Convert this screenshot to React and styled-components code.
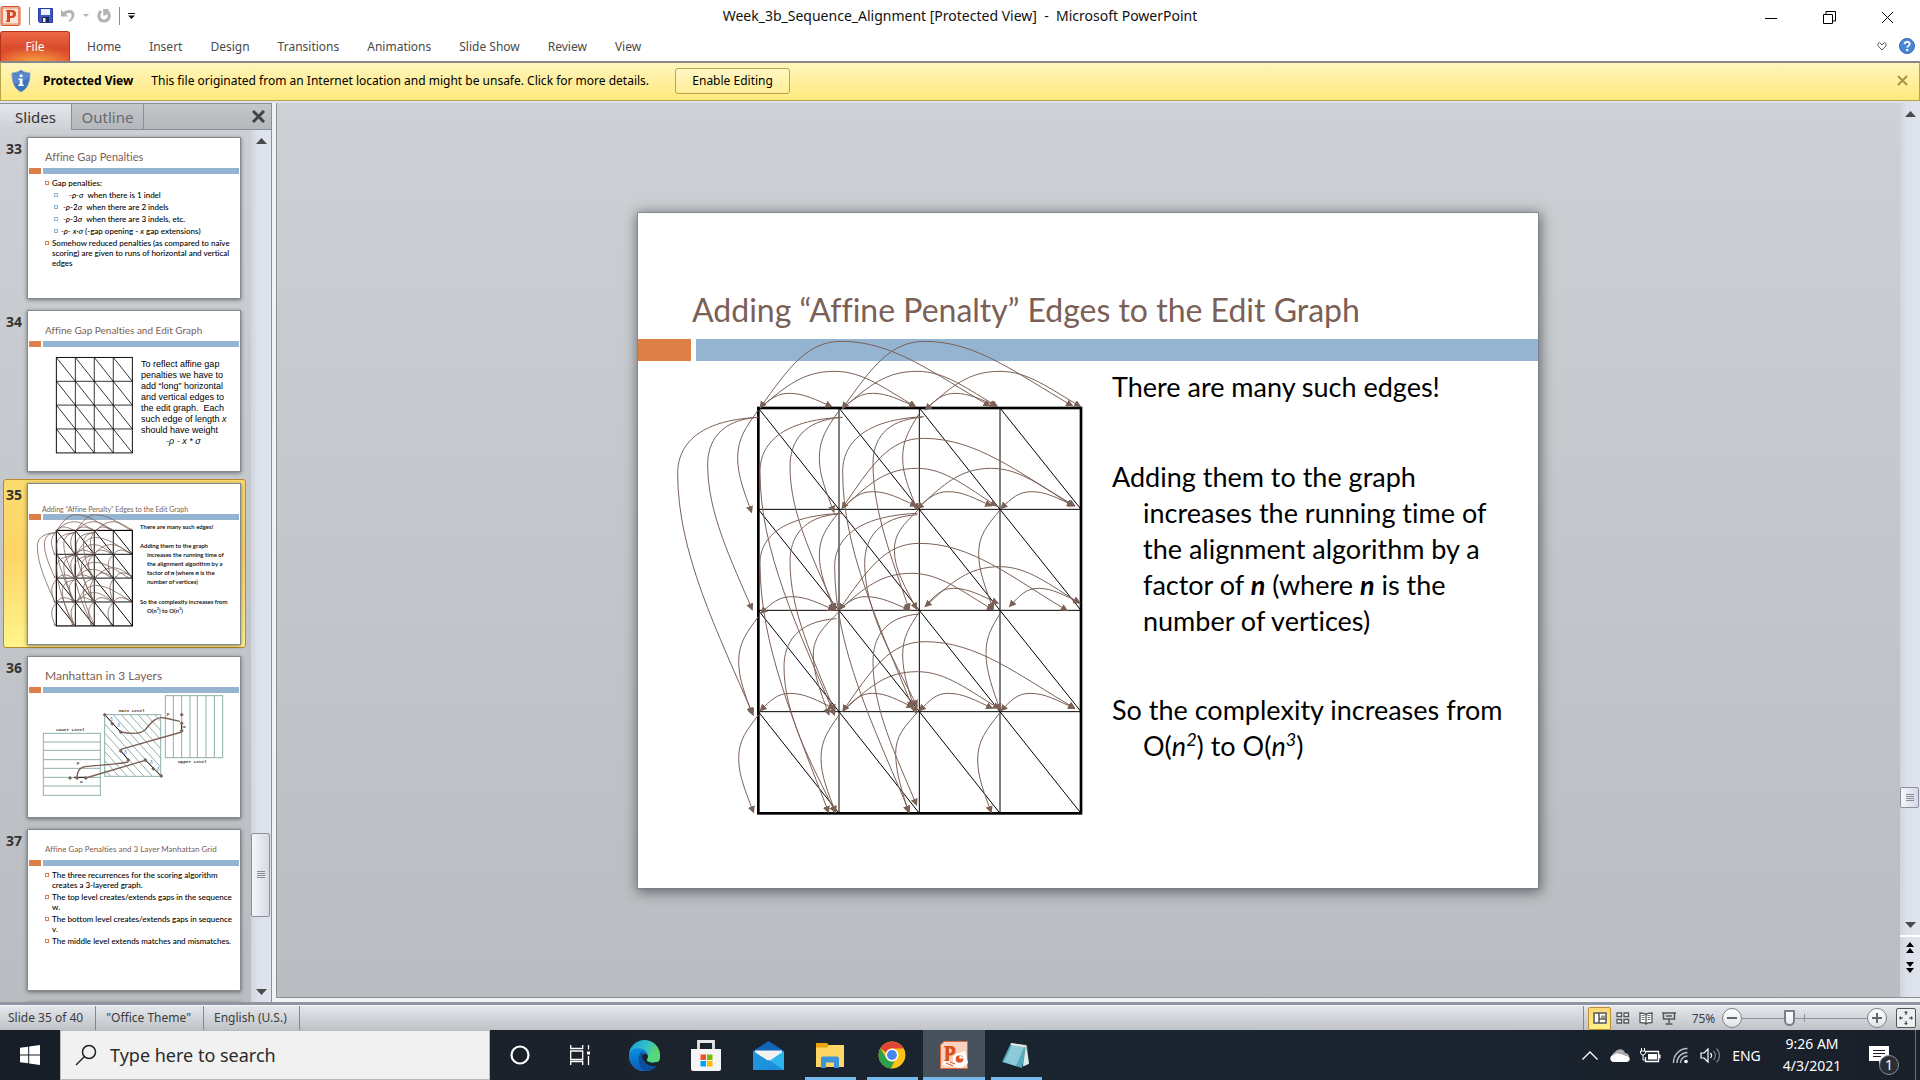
import React from "react";
import styled, { createGlobalStyle, css } from "styled-components";

const UI = `"Noto Sans", "Open Sans", sans-serif`;
const DECK = `Lato, "Open Sans", sans-serif`;
const BROWN = "#7b6056";
const ORANGE = "#dd8047";
const BLUE = "#94b4d2";

const Global = createGlobalStyle`
  *, *::before, *::after { box-sizing: border-box; }
  html, body { margin: 0; padding: 0; }
  body { font-family: ${UI}; font-size: 12px; color: #444; overflow: hidden; }
  button, input { font: inherit; color: inherit; }
  button { border: 0; padding: 0; background: none; display: flex; align-items: center; justify-content: center; }
  svg { display: block; flex: none; }
  p, ul, h1, h2 { margin: 0; padding: 0; font-weight: inherit; font-size: inherit; }
`;

const Page = styled.div`
  height: 100vh;
  display: flex;
  flex-direction: column;
  background: #fff;
`;

/* ---------- title bar and ribbon ---------- */
const TitleBar = styled.header`
  height: 31px;
  flex: none;
  display: grid;
  grid-template-columns: 1fr auto 1fr;
  align-items: center;
`;
const QuickAccess = styled.div`
  display: flex;
  align-items: center;
  gap: 8px;
  height: 26px;
`;
const Separator = styled.i`
  width: 1px;
  height: 18px;
  background: #8a8a8a;
`;
const WindowTitle = styled.h1`
  font-size: 14px;
  color: #111;
`;
const WindowButtons = styled.div`
  display: flex;
  justify-content: flex-end;
  align-items: center;
  height: 31px;
  padding: 4px 4px 0 0;
`;
const WindowButton = styled.button`
  width: 58px;
  height: 26px;
`;
const Ribbon = styled.nav`
  height: 30px;
  flex: none;
  display: flex;
  align-items: stretch;
`;
const FileTab = styled.button`
  width: 70px;
  border: 1px solid #b5341c;
  border-bottom: 0;
  border-radius: 3px 3px 0 0;
  color: #fff;
  background: radial-gradient(ellipse 60% 60% at 50% 110%, #f7a944, rgba(247, 169, 68, 0)),
    linear-gradient(#ee6a47, #d94a2b 55%, #e4532e);
  margin-right: 3px;
`;
const Tab = styled.button`
  padding: 0 14px;
  color: #4a4a4a;
`;
const RibbonEnd = styled.div`
  margin-left: auto;
  display: flex;
  align-items: center;
  gap: 12px;
  padding-right: 5px;
`;

/* ---------- message bar ---------- */
const MessageBar = styled.section`
  height: 40px;
  flex: none;
  display: flex;
  align-items: center;
  border: 1px solid #b5a450;
  border-top: 2px solid #85878c;
  background: linear-gradient(#fff5bd, #ffe97c);
  color: #000;
  padding: 0 11px 2px 10px;
`;
const MessageTitle = styled.strong`
  margin: 0 18px 0 12px;
`;
const MessageButton = styled.button`
  margin-left: 26px;
  width: 115px;
  height: 26px;
  border: 1px solid #b5a450;
  border-radius: 3px;
  background: linear-gradient(#fff7c4, #ffee98);
`;
const MessageClose = styled.button`
  margin-left: auto;
`;

/* ---------- workspace ---------- */
const Workspace = styled.div`
  flex: 1;
  min-height: 0;
  display: grid;
  grid-template-columns: 272px minmax(0, 1fr);
  border-top: 2px solid #dfe2e6;
  border-bottom: 3px solid #8f96a2;
  background: linear-gradient(#cdd0d4, #b9bcc0);
`;
const Pane = styled.aside`
  display: flex;
  flex-direction: column;
  min-height: 0;
  border-right: 1px solid #8a9098;
`;
const PaneTabs = styled.div`
  height: 27px;
  flex: none;
  display: flex;
  border-top: 1px solid #8a9098;
`;
const PaneTab = styled.button`
  width: 72px;
  font-size: 15px;
  color: ${(p) => (p.$active ? "#333" : "#666a6e")};
  border-right: 1px solid #8a9098;
  ${(p) =>
    p.$active
      ? css`background: linear-gradient(#e3e6ea, #cdd0d4);`
      : css`background: linear-gradient(#c3c7ca, #b4b8bc); border-bottom: 1px solid #8a9098;`}
`;
const PaneTabFill = styled.div`
  flex: 1;
  display: flex;
  align-items: center;
  justify-content: flex-end;
  padding-right: 6px;
  background: linear-gradient(#c3c7ca, #b4b8bc);
  border-bottom: 1px solid #8a9098;
`;
const PaneBody = styled.div`
  flex: 1;
  min-height: 0;
  display: grid;
  grid-template-columns: minmax(0, 1fr) 20px;
`;
const ThumbList = styled.ol`
  list-style: none;
  margin: 0;
  padding: 3px 5px 0 3px;
  overflow: hidden;
  display: flex;
  flex-direction: column;
  gap: 4px;
`;
const ThumbItem = styled.li`
  flex: none;
  height: 169px;
  display: grid;
  grid-template-columns: 24px 212px;
  align-items: start;
  padding-top: 4px;
  border: 1px solid ${(p) => (p.$active ? "#b98a2c" : "transparent")};
  border-radius: 3px;
  background: ${(p) => (p.$active ? "linear-gradient(#fbdc6e, #fdd468 45%, #fff58a)" : "none")};
`;
const ThumbNumber = styled.b`
  font-size: 14px;
  line-height: 22px;
  padding-left: 2px;
  color: #333;
`;
const Thumb = styled.article`
  height: 160px;
  position: relative;
  display: flex;
  flex-direction: column;
  background: #fff;
  box-shadow: 0 0 0 1px #85888f, 0 1px 4px 1px rgba(0, 0, 0, 0.45);
  font-family: ${DECK};
  font-variant-ligatures: none;
  color: #000;
`;
const ThumbTitle = styled.h2`
  height: 30px;
  flex: none;
  padding: ${(p) => (p.$low ? "20px 0 0 14px" : "8px 0 0 17px")};
  display: flex;
  align-items: center;
  white-space: nowrap;
  font-size: ${(p) => p.$size}px;
  line-height: 10px;
  color: ${BROWN};
`;
const ThumbBand = styled.div`
  height: 6px;
  flex: none;
  margin: 0 1px;
  display: grid;
  grid-template-columns: 12px 1fr;
  gap: 2px;
  &::before { content: ""; background: ${ORANGE}; }
  &::after { content: ""; background: ${BLUE}; }
`;
const ThumbBullets = styled.ul`
  list-style: none;
  padding: 4px 10px 0 17px;
  font-size: 8px;
  font-weight: 500;
  line-height: 10px;
`;
const Bullet = styled.li`
  display: grid;
  grid-template-columns: 7px 1fr;
  margin-bottom: 2px;
  margin-left: ${(p) => (p.$sub ? 9 : 0)}px;
  white-space: pre;
  &::before {
    content: "";
    width: 4px;
    height: 4px;
    margin-top: 3px;
    border: 1px solid ${(p) => (p.$sub ? BLUE : ORANGE)};
  }
`;
const ThumbAside = styled.div`
  padding: 12px 0 0 113px;
  font-family: "Liberation Sans", sans-serif;
  font-size: 9px;
  line-height: 11px;
  white-space: pre;
`;
const ThumbCopy = styled.div`
  padding: 2px 0 0 112px;
  font-size: 6px;
  font-weight: 600;
  line-height: 9px;
  white-space: nowrap;
  sup { font-size: 4px; line-height: 0; }
`;
const Hanging = styled.p`
  padding-left: ${(p) => p.$indent}px;
  text-indent: -${(p) => p.$indent}px;
  margin-bottom: ${(p) => p.$gap}px;
`;
const Canvas = styled.svg`
  position: absolute;
  inset: 0;
  width: 100%;
  height: 100%;
`;

/* ---------- scroll bars ---------- */
const ScrollBar = styled.div`
  display: flex;
  flex-direction: column;
  padding-top: 1px;
  background: linear-gradient(90deg, #d0d5dc, #dde1ea 35%, #e0e4ee);
`;
const ScrollButton = styled.button`
  width: 100%;
  height: 20px;
  flex: none;
`;
const Track = styled.div`
  flex: 1;
  display: grid;
  grid-template-rows: ${(p) => p.$rows};
`;
const Grip = styled.button`
  grid-row: 2;
  margin-right: 1px;
  border: 1px solid #8a90a0;
  border-radius: 2px;
  background: linear-gradient(90deg, #f5f7fa, #d4d9e2);
`;
const SlideJump = styled.div`
  height: 62px;
  flex: none;
  border-top: 2px solid #fff;
`;

/* ---------- slide ---------- */
const Editor = styled.div`
  margin-left: 4px;
  margin-bottom: 4px;
  min-height: 0;
  display: grid;
  grid-template-columns: minmax(0, 1fr) 20px;
  border-left: 1px solid #8a9098;
  border-bottom: 1px solid #8a9098;
  outline: 4px solid #f0f2f4;
  clip-path: inset(0 0 -4px -4px);
`;
const Stage = styled.main`
  display: flex;
  align-items: center;
  justify-content: center;
  padding-right: 1px;
`;
const SlidePage = styled.article`
  position: relative;
  width: 900px;
  aspect-ratio: 4 / 3;
  background: #fff;
  box-shadow: 0 0 0 1px rgba(120, 124, 130, 0.6), 1px 2px 12px 2px rgba(50, 54, 60, 0.65);
  font-family: ${DECK};
  font-variant-ligatures: none;
  color: #000;
  display: flex;
  flex-direction: column;
`;
const SlideTitle = styled.h1`
  height: 126px;
  flex: none;
  display: flex;
  align-items: flex-end;
  padding: 0 0 12px 54px;
  font-size: 32px;
  line-height: 34px;
  color: ${BROWN};
`;
const Band = styled.div`
  height: 22px;
  flex: none;
  display: grid;
  grid-template-columns: 53px 1fr;
  gap: 5px;
  &::before { content: ""; background: ${ORANGE}; }
  &::after { content: ""; background: ${BLUE}; }
`;
const SlideCopy = styled.div`
  padding: 8px 20px 0 474px;
  font-size: 27px;
  line-height: 36px;
  white-space: nowrap;
  sup { font-size: 18px; line-height: 0; }
`;

/* ---------- status bar ---------- */
const StatusBar = styled.footer`
  height: 25px;
  flex: none;
  display: flex;
  align-items: stretch;
  background: linear-gradient(#e4e7eb, #bfc3c7);
  border-top: 1px solid #f4f5f7;
  color: #3c3c3c;
`;
const StatusItem = styled.div`
  display: flex;
  align-items: center;
  padding: 0 12px 1px 8px;
  border-right: 1px solid #85898e;
  & + & { padding-left: 10px; }
`;
const ViewTools = styled.div`
  margin-left: auto;
  display: flex;
  align-items: center;
  border-left: 1px solid #85898e;
  padding: 0 4px;
`;
const ViewButton = styled.button`
  width: 23px;
  height: 23px;
  border-radius: 2px;
  ${(p) => p.$active && css`border: 1px solid #c28f30; background: linear-gradient(#fbd873, #fdf08a);`}
`;
const ZoomLabel = styled.span`
  width: 37px;
  text-align: center;
  margin-left: 5px;
`;
const RoundButton = styled.button`
  width: 20px;
  height: 20px;
  border: 1px solid #7c8087;
  border-radius: 50%;
  background: linear-gradient(#fff, #dfe2e6);
`;
const ZoomSlider = styled.input`
  appearance: none;
  width: 125px;
  height: 20px;
  margin: 0;
  background: linear-gradient(#8d939d, #8d939d) 0 50% / 100% 1px no-repeat,
    linear-gradient(#8d939d, #8d939d) 50% 50% / 1px 8px no-repeat;
  &::-webkit-slider-thumb {
    appearance: none;
    width: 11px;
    height: 16px;
    background: linear-gradient(#fff, #e8eaee);
    border: 2px solid #74808e;
    border-radius: 1px 1px 6px 6px;
  }
`;
const FitButton = styled.button`
  width: 20px;
  height: 20px;
  margin-left: 9px;
  border: 1px solid #555;
  border-radius: 2px;
  background: #eceef0;
`;

/* ---------- taskbar ---------- */
const TaskBar = styled.nav`
  height: 50px;
  flex: none;
  display: flex;
  align-items: stretch;
  background: linear-gradient(90deg, #181e28, #1b222b 30%, #1a2531 60%, #1a202a);
  color: #fff;
`;
const StartButton = styled.button`
  width: 60px;
`;
const Search = styled.label`
  width: 430px;
  display: flex;
  align-items: center;
  gap: 13px;
  padding-left: 14px;
  background: #f1f1f1;
  border: 1px solid #b8b8b8;
`;
const SearchInput = styled.input`
  flex: 1;
  min-width: 0;
  border: 0;
  padding: 0;
  outline: 0;
  background: none;
  font-size: 18px;
  color: #222;
  &::placeholder { color: #2b2b2b; opacity: 1; }
`;
const TaskTool = styled.button`
  width: 60px;
`;
const Apps = styled.div`
  display: flex;
  padding-left: 3px;
`;
const AppButton = styled.button`
  width: 62px;
  border-bottom: 3px solid transparent;
  padding-top: 3px;
  ${(p) =>
    p.$state &&
    css`
      background: linear-gradient(#76b9ed, #76b9ed) 50% 100% / ${p.$state === "active" ? 62 : 51}px 3px no-repeat border-box
        ${p.$state === "active" ? "#47515b" : ""};
    `}
`;
const Tray = styled.div`
  margin-left: auto;
  display: flex;
  align-items: center;
`;
const TrayButton = styled.button`
  width: 30px;
  height: 50px;
`;
const Language = styled.button`
  width: 43px;
  font-size: 14px;
`;
const Clock = styled.button`
  width: 88px;
  flex-direction: column;
  font-size: 14px;
  line-height: 22px;
`;
const Notice = styled.button`
  position: relative;
  width: 60px;
  height: 50px;
  padding-right: 14px;
  border-right: 1px solid #6a7078;
  margin-right: 4px;
`;
const NoticeBadge = styled.span`
  position: absolute;
  right: 16px;
  bottom: 5px;
  width: 20px;
  height: 20px;
  border: 1px solid #8c9096;
  border-radius: 50%;
  background: #2b2f35;
  font-size: 14px;
  line-height: 18px;
  text-align: center;
`;

/* ---------- edit graph drawing ---------- */
const XS = [385, 627, 868, 1110, 1353];
const YS = [624, 928, 1231, 1535, 1840];

// start x, y, crest x, y, end x, y, and whether the start carries an arrowhead too
const ACROSS = [
  [390, 624, 635, 424, 1080, 618, 1], [390, 624, 615, 514, 857, 620], [390, 624, 478, 580, 606, 620],
  [637, 626, 885, 424, 1328, 618, 1], [637, 626, 862, 514, 1103, 620], [637, 626, 728, 580, 857, 620],
  [885, 630, 1110, 514, 1352, 620, 1], [885, 630, 975, 580, 1100, 618],
  [636, 926, 880, 715, 1335, 918, 1], [636, 926, 862, 805, 1100, 918], [636, 926, 728, 875, 860, 918],
  [862, 926, 1085, 805, 1330, 918, 1], [862, 926, 955, 875, 1085, 918],
  [1112, 926, 1205, 875, 1334, 918, 1],
  [392, 1240, 485, 1190, 614, 1230, 1],
  [627, 1230, 868, 1030, 1312, 1232, 1], [627, 1230, 845, 1120, 1090, 1230], [627, 1230, 708, 1190, 840, 1230],
  [885, 1220, 1110, 1100, 1350, 1210, 1], [885, 1220, 970, 1165, 1105, 1210],
  [1138, 1220, 1225, 1165, 1350, 1208, 1],
  [390, 1533, 480, 1480, 614, 1526, 1],
  [638, 1534, 885, 1325, 1335, 1525, 1], [638, 1534, 862, 1415, 1108, 1526], [638, 1534, 728, 1480, 850, 1522],
  [868, 1533, 955, 1480, 1088, 1525, 1],
  [1112, 1533, 1200, 1480, 1334, 1525, 1],
];
const DOWN = [
  [385, 652, 143, 820, 370, 1546], [385, 652, 233, 795, 367, 1230], [385, 630, 323, 775, 365, 938],
  [385, 1250, 326, 1385, 366, 1542], [385, 1545, 326, 1675, 371, 1838],
  [637, 652, 390, 815, 614, 1546], [637, 652, 480, 800, 617, 1230], [627, 632, 568, 775, 612, 937],
  [637, 940, 390, 1090, 596, 1838], [627, 942, 480, 1085, 614, 1534], [627, 935, 568, 1065, 612, 1230],
  [620, 1256, 462, 1400, 616, 1838], [627, 1235, 550, 1365, 597, 1545], [627, 1545, 573, 1675, 617, 1838],
  [882, 650, 638, 815, 848, 1522], [876, 652, 729, 790, 838, 1230], [868, 640, 818, 775, 862, 930],
  [862, 940, 614, 1100, 838, 1836], [862, 944, 704, 1090, 862, 1520], [864, 930, 793, 1050, 860, 1228],
  [868, 1242, 729, 1385, 860, 1816], [868, 1235, 818, 1365, 858, 1540], [864, 1535, 797, 1660, 836, 1838],
  [1110, 930, 1046, 1060, 1090, 1228], [1113, 1236, 1068, 1360, 1110, 1530], [1108, 1540, 1043, 1680, 1084, 1838],
];

function acrossPath([x0, y0, cx, cy, x1, y1]) {
  const a = cx - x0, h = y0 - cy, b = x1 - cx, g = y1 - cy;
  return `M${x0},${y0}C${x0 + a * 0.36},${y0 - h * 0.62} ${cx - a * 0.42},${cy} ${cx},${cy}C${cx + b * 0.35},${cy} ${cx + b * 0.62},${cy + g * 0.5} ${x1},${y1}`;
}
function downPath([x0, y0, cx, cy, x1, y1]) {
  const long = x0 - cx > 100;
  const a = x0 - cx, h = cy - y0, b = cy - y1, g = x1 - cx;
  const first = long ? `${x0 - a * 0.75},${y0 + h * 0.05} ${cx},${cy - h * 0.5}` : `${x0 - a * 0.6},${y0 + h * 0.36} ${cx},${cy - h * 0.42}`;
  return `M${x0},${y0}C${first} ${cx},${cy}C${cx},${cy - b * 0.33} ${cx + g * 0.52},${cy - b * 0.65} ${x1},${y1}`;
}

function Grid({ frame, line }) {
  return (
    <g stroke="#000" fill="none">
      {XS.slice(1, 4).map((x) => <path key={x} strokeWidth={line} d={`M${x},624V1840`} />)}
      {YS.slice(1, 4).map((y) => <path key={y} strokeWidth={line} d={`M385,${y}H1353`} />)}
      {XS.slice(0, 4).map((x, i) =>
        YS.slice(0, 4).map((y, j) => (
          <path key={`${i}${j}`} strokeWidth={line} d={`M${x},${y}L${XS[i + 1]},${YS[j + 1]}`} />
        ))
      )}
      <rect x="385" y="624" width="968" height="1216" strokeWidth={frame} />
    </g>
  );
}

function EditGraph({ id, frame, line, arc, head, edges = true }) {
  return (
    <Canvas viewBox="24 39 2700 2025" aria-hidden="true">
      <defs>
        <marker id={id} viewBox="0 0 10 10" refX="9" refY="5" markerWidth={head} markerHeight={head} markerUnits="userSpaceOnUse" orient="auto-start-reverse">
          <path d="M0,0L10,5L0,10Z" fill={BROWN} />
        </marker>
      </defs>
      <Grid frame={frame} line={line} />
      {edges && (
        <g fill="none" stroke={BROWN} strokeWidth={arc}>
          {ACROSS.map((e, i) => (
            <path key={i} d={acrossPath(e)} markerEnd={`url(#${id})`} markerStart={e[6] ? `url(#${id})` : undefined} />
          ))}
          {DOWN.map((e, i) => <path key={i} d={downPath(e)} markerEnd={`url(#${id})`} />)}
        </g>
      )}
    </Canvas>
  );
}

function LayersDrawing() {
  const teal = "#8fb0ab";
  return (
    <Canvas viewBox="84 561 636 480" aria-hidden="true">
      <defs>
        <clipPath id="main-level"><rect x="314" y="734" width="168" height="185" /></clipPath>
      </defs>
      <g fill="none" stroke={teal} strokeWidth="3">
        <rect x="130" y="790" width="171" height="186" />
        {[816, 841, 869, 895, 922, 948].map((y) => <path key={y} d={`M130,${y}H301`} />)}
        <rect x="496" y="677" width="172" height="186" />
        {[520, 545, 570, 592, 618, 643].map((x) => <path key={x} d={`M${x},677V863`} />)}
        <rect x="314" y="734" width="168" height="185" />
        <g clipPath="url(#main-level)">
          {[-150, -125, -100, -75, -50, -25, 0, 25, 50, 75, 100, 125, 150].map((d) => (
            <path key={d} d={`M${314 + d},734l168,185`} />
          ))}
        </g>
      </g>
      <g stroke="#111" strokeWidth="3" fill="none">
        <path d="M314,734L362,786M362,842L385,870M436,870L484,918M222,922H260M545,757V783" />
      </g>
      <g stroke={BROWN} strokeWidth="4" fill="none">
        <path d="M362,786C400,794 420,792 435,780C455,755 470,738 495,744L540,754" />
        <path d="M545,786L362,838M385,876C330,886 290,885 255,890C235,894 233,905 231,920M257,924L436,871" />
      </g>
      <g fill={BROWN}>
        {[[314, 734], [337, 761], [362, 786], [362, 843], [385, 870], [436, 870], [460, 896], [484, 918], [210, 924], [231, 924], [257, 924], [545, 734], [545, 760], [545, 782]].map(([x, y]) => (
          <path key={`${x}-${y}`} d={`M${x - 6},${y}l6,-6l6,6l-6,6z`} />
        ))}
      </g>
      <g fontFamily="Liberation Mono, monospace" fontSize="13" fontWeight="700" fill="#333">
        <text x="168" y="782">Lower Level</text>
        <text x="356" y="726">Main Level</text>
        <text x="534" y="878">Upper Level</text>
        <text x="230" y="882">ρ</text>
        <text x="500" y="735">ρ</text>
        <text x="240" y="938">σ</text>
        <text x="549" y="775">σ</text>
      </g>
      <g fontFamily="Liberation Mono, monospace" fontSize="14" fill="#4a86b8">
        <text x="330" y="752">δ</text>
        <text x="352" y="772">δ</text>
        <text x="372" y="852">δ</text>
        <text x="450" y="882">δ</text>
        <text x="470" y="904">δ</text>
      </g>
    </Canvas>
  );
}

/* ---------- icons ---------- */
const Icon = ({ w = 16, h = w, box, children }) => (
  <svg width={w} height={h} viewBox={box || `0 0 ${w} ${h}`} fill="none" aria-hidden="true">{children}</svg>
);
const PLogo = () => (
  <Icon w={21} h={20}>
    <rect x="1" y="0.500" width="19" height="19" rx="1.500" fill="#f6c5ac" stroke="#d2502b" />
    <rect x="2.500" y="2" width="16" height="16" fill="#fbe3d6" stroke="#e98c66" />
    <path fill="#d2471c" fillRule="evenodd" d="M6 4h5.500c3.200 0 4.500 1.700 4.500 3.900 0 2.600-1.700 4.100-4.600 4.100H10v4H6v-1l1-.5V5.500L6 5zM10 6v4h1c1.300 0 1.900-.8 1.900-2s-.6-2-1.900-2z" />
  </Icon>
);
const Disk = () => (
  <Icon w={15} h={15}>
    <path d="M.5.5h14v14h-13l-1-1z" fill="#3f57c4" stroke="#27389a" />
    <path d="M3 1h9v6H3z" fill="#eef2fb" />
    <path d="M4 9h7v5H4z" fill="#1d2550" /><path d="M5 10h2.500v4H5z" fill="#e8ecf8" />
  </Icon>
);
const Undo = () => (
  <Icon w={14} h={14}>
    <path d="M0 1l2.500 2C6 0 13 0 13.500 5.500c0 3.500-2.500 6-5 7.500l-1-1c2-2 3-3.500 3-6C10.300 3.500 7.500 3.500 5 5l2 2.500H0z" fill="#b3b3b3" />
  </Icon>
);
const Redo = () => (
  <Icon w={14} h={14}>
    <path d="M4 2C.5 5.500 1.500 12 7 12s7-6.500 3-10" stroke="#b3b3b3" strokeWidth="3" />
    <path d="M6 0h5.500L10 5.500 6.500 7z" fill="#b3b3b3" />
  </Icon>
);
const Caret = ({ w = 11, h = 6, up, color = "#4a4a4a" }) => (
  <Icon w={w} h={h}><path d={up ? `M0 ${h}L${w / 2} 0L${w} ${h}z` : `M0 0H${w}L${w / 2} ${h}z`} fill={color} /></Icon>
);
const Double = ({ up }) => (
  <Icon w={8} h={11}>
    <path fill="#000" d={up ? "M0 5L4 0l4 5zM0 11l4-5 4 5z" : "M0 0h8L4 5zM0 6h8l-4 5z"} />
  </Icon>
);
const Cross = ({ s = 10, color = "#444", w = 2 }) => (
  <Icon w={s}><path d={`M1 1L${s - 1} ${s - 1}M${s - 1} 1L1 ${s - 1}`} stroke={color} strokeWidth={w} /></Icon>
);
const Shield = () => (
  <Icon w={20} h={24}>
    <path d="M10 1C7.500 3 4.500 4 1 4c0 9 2 15.500 9 19 7-3.500 9-10 9-19-3.500 0-6.500-1-9-3z" fill="#3d72bd" stroke="#8ba5c9" />
    <path d="M10 2.500C7.500 4 5 5 2 5c0 4 .5 7 2 10C9 14 15 11 18 8V5c-3 0-5.500-1-8-2.500z" fill="#6d9ad6" opacity=".6" />
    <path d="M8.700 5.500h2.800v2.500H8.700zM7.500 9.500h4v6h1.300V17H7.200v-1.500h1.500V11H7.500z" fill="#fff" />
  </Icon>
);
const Help = () => (
  <Icon w={16}>
    <circle cx="8" cy="8" r="7.500" fill="#4a86d6" stroke="#3566b0" />
    <path d="M5.500 6.200C5.500 3 10.700 3 10.700 6c0 1.800-2.500 1.900-2.500 3.600" stroke="#fff" strokeWidth="1.800" /><circle cx="8.200" cy="12" r="1.200" fill="#fff" />
  </Icon>
);
const Chevrons = () => (
  <Icon w={10} h={9}><path d="M1 1.500l1.500-1L5 3l2.500-2.500L9 1.500V4L5 8 1 4z" stroke="#5a5f66" /></Icon>
);
const WinLogo = () => (
  <Icon w={20}><path fill="#fff" d="M0 2.800l8.200-1.100v7.800H0zM9.200 1.500L20 0v9.500H9.200zM0 10.500h8.200v7.800L0 17.200zM9.200 10.500H20V20L9.200 18.500z" /></Icon>
);
const Lens = () => (
  <Icon w={22}><circle cx="14" cy="8" r="6.500" stroke="#222" strokeWidth="1.500" /><path d="M9.500 12.500L1 21" stroke="#222" strokeWidth="1.500" /></Icon>
);
const Ring = () => <Icon w={22}><circle cx="11" cy="11" r="8.500" stroke="#fff" strokeWidth="2.200" /></Icon>;
const TaskView = () => (
  <Icon w={20} h={20}>
    <path d="M.7 0v3.500h12V0M.7 20v-3.500h12V20M.7 6h12v8.500H.7zM18.500 0v4.500M18.500 11v9" stroke="#fff" strokeWidth="1.300" />
    <path d="M17 6.500h3v3h-3z" fill="#fff" />
  </Icon>
);
const Edge = () => (
  <Icon w={31} box="0 0 32 32">
    <defs>
      <linearGradient id="edge-a" x1="0" y1="0" x2="1" y2=".5"><stop stopColor="#1b9de2" /><stop offset=".55" stopColor="#35c1c6" /><stop offset="1" stopColor="#6ddf4c" /></linearGradient>
      <linearGradient id="edge-b" x1="0" y1="0" x2="0" y2="1"><stop stopColor="#0d8fe0" /><stop offset="1" stopColor="#0b5cb8" /></linearGradient>
    </defs>
    <circle cx="16" cy="16" r="16" fill="url(#edge-a)" />
    <path d="M0 15C2 9 8 7.500 13 9c5 1.500 7 5 6.500 8.500l11.500 6C28 29 22 32 16 32 6 32-.5 24 0 15z" fill="url(#edge-b)" />
    <path d="M10 19c0-4 2-7 5-8-4 8 2 15 9 15 3 0 5-.8 6.500-1.800C27 31 20 32.500 16 31.800 12 30 10 24 10 19z" fill="#0d4f9e" />
    <path d="M13.500 16.500c0-3 5-4 6 .5.200 1.500-1.500 2.500-1 4 1.500 3 9 3 13 1v4c-5 2-12 1-15-3-1.700-2-3-4-3-6.500z" fill="#1a222c" />
    <path d="M18.500 21c1 2.500 8 3 11.500.5C33 19 32 14 32 14l-8-2-4 5c0 2-2 2.500-1.500 4z" fill="#55d77e" />
  </Icon>
);
const Store = () => (
  <Icon w={30} h={31}>
    <path d="M7.500 10V1.500h15V10" stroke="#e6e6e6" strokeWidth="2.800" />
    <path d="M0 9h30v20a2 2 0 01-2 2H2a2 2 0 01-2-2z" fill="#f5f5f5" />
    <path d="M9.500 14.500H15V20H9.500z" fill="#f25022" /><path d="M16 14.500h5.500V20H16z" fill="#7fba00" />
    <path d="M9.500 21H15v5.500H9.500z" fill="#00a4ef" /><path d="M16 21h5.500v5.500H16z" fill="#ffb900" />
  </Icon>
);
const Mail = () => (
  <Icon w={31} h={29}>
    <path d="M0 10L15.500 0 31 10v6H0z" fill="#0f66b8" />
    <path d="M2 9.500h27V20H2z" fill="#f3f3f3" />
    <path d="M0 10l15.500 10.500L31 10v19H0z" fill="#2fb5ee" /><path d="M0 29l15.500-10L31 29z" fill="#1b8ede" />
    <path d="M0 10l20 13-9 6H0z" fill="#1f93dc" />
  </Icon>
);
const Folder = () => (
  <Icon w={28} h={25}>
    <path d="M0 0h11l2.500 3H28v8H0z" fill="#e9a30c" />
    <path d="M0 4.500h11l2-2.500h15v22H0z" fill="#fdd663" />
    <path d="M5 25v-9.500c0-1.200.8-2 2-2h14c1.200 0 2 .8 2 2V25h-5v-5.500h-8V25z" fill="#3d94dc" />
  </Icon>
);
const Chrome = () => (
  <Icon w={28} box="0 0 48 48">
    <circle cx="24" cy="24" r="23" fill="#fbc116" />
    <path d="M4 12.500A23 23 0 0144 13H24a11 11 0 00-10 6.500z" fill="#e04436" />
    <path d="M4 12.500L14.500 30A11 11 0 0024 35l4-.5L22 47A23 23 0 014 12.500z" fill="#2ba14b" />
    <circle cx="24" cy="24" r="11" fill="#fff" /><circle cx="24" cy="24" r="8.500" fill="#4a86ee" />
  </Icon>
);
const PptApp = () => (
  <Icon w={28} h={28}>
    <path d="M4 .5h23.500v27H.5V4z" fill="#f8d2be" stroke="#e0683d" />
    <path d="M13 14l12-4 3 12-7 5-19-3 2-4 9 1z" fill="#fff" />
    <path fill="#d8501f" fillRule="evenodd" d="M4 5h6.500c3.500 0 5 2 5 4.700 0 3-2 4.800-5.400 4.800H9V20H4.500v-1l1-.5v-12L4 6zM9 7.500V12h.8c1.300 0 2-.9 2-2.300s-.7-2.200-2-2.200z" />
    <circle cx="19.500" cy="18" r="3.800" fill="#e0562c" /><path d="M19.500 18V14l4 3z" fill="#fff" />
    <path d="M6 22l7 3M10 21l5 2" stroke="#e0562c" strokeWidth="1.200" />
  </Icon>
);
const Notepad = () => (
  <Icon w={28} h={27}>
    <path d="M9 1l16 2 2 19-5 2z" fill="#8d8b78" />
    <path d="M9 1l15 2.500L20 26 0 20z" fill="#58a9bd" /><path d="M10 3l12 2-8 19-12-4z" fill="#a8dbe4" opacity=".65" />
    <path d="M24 3.500l3 18-6 3z" fill="#d7ecef" /><path d="M9 1l15 2.500v2L9 3z" fill="#e8e8e0" />
  </Icon>
);
const Cloud = () => (
  <Icon w={20} h={13}>
    <path d="M4 11a4.500 4.500 0 011-8C8-1 14-.5 15 4c5 0 6 7 1 8.500H4z" fill="#a9abae" /><path d="M4 13c-5 0-5-7 0-7 3-3 6-1 12 1 5 .5 5 6 0 6z" fill="#fff" />
  </Icon>
);
const Battery = () => (
  <Icon w={21} h={15}>
    <path d="M6 3.500h12.500v10h-13V9" stroke="#fff" strokeWidth="1.300" /><path d="M8 6h9v5.500H8z" fill="#fff" /><path d="M19 6.500h1.500v4H19z" fill="#fff" />
    <path d="M1.500 0v3M4.500 0v3M.5 3h5v2l-1.500 2H2L.5 5zM3 7v5h2" stroke="#fff" />
  </Icon>
);
const Wifi = () => (
  <Icon w={17} h={17}>
    <path d="M1.500 16A14 14 0 0115.500 1.500M5 16A10.500 10.500 0 0115.500 5.500M8.500 16a7 7 0 017-7" stroke="#b9bcc0" strokeWidth="1.400" /><circle cx="14" cy="14.500" r="1.800" fill="#fff" />
  </Icon>
);
const Volume = () => (
  <Icon w={20} h={17}>
    <path d="M1 6h3l4-4v13l-4-4H1z" stroke="#fff" strokeWidth="1.200" /><path d="M10.500 6c1.300 1.500 1.300 3.500 0 5" stroke="#fff" strokeWidth="1.200" />
    <path d="M13.500 4c2.500 2.500 2.500 6.500 0 9M16.500 1.500c4 4 4 10 0 14" stroke="#7b8087" strokeWidth="1.200" />
  </Icon>
);
const Bubble = () => (
  <Icon w={20} h={19}><path d="M0 0h20v15H13l-3 4v-4H0z" fill="#fff" /><path d="M4 4.500h12M4 7.500h12M4 10.500h8" stroke="#1a202a" /></Icon>
);

const NormalView = () => (
  <Icon w={14} h={12}><path d="M1 1h12v10H1z" fill="#fff" stroke="#555" strokeWidth="1.500" /><path d="M6 1v10M6 7h7" stroke="#555" strokeWidth="1.500" /><path d="M8 3.500h4V6H8z" fill="#999" /></Icon>
);
const SorterView = () => (
  <Icon w={14} h={12}><path d="M1 1h4.500v3.500H1zM8 1h4.500v3.500H8zM1 7.500h4.500V11H1zM8 7.500h4.500V11H8z" fill="#fff" stroke="#555" strokeWidth="1.300" /></Icon>
);
const ReadView = () => (
  <Icon w={14} h={13}><path d="M1 1c2.500 0 4.500 0 6 1.500C8.500 1 10.500 1 13 1v9.500c-2.500 0-4.500 0-6 1.500-1.500-1.500-3.500-1.500-6-1.500zM7 2.500V12" fill="#fff" stroke="#555" strokeWidth="1.300" /><path d="M2.500 3.500h3M2.500 5.500h3M2.500 7.500h3M8.500 3.500h3M8.500 5.500h3M8.500 7.500h3" stroke="#777" /></Icon>
);
const ShowView = () => (
  <Icon w={14} h={13}><path d="M0 1h14M1.500 1v6h11V1" stroke="#555" strokeWidth="1.500" /><path d="M4 4h6M7 7v4M3.500 12h7" stroke="#555" strokeWidth="1.500" /></Icon>
);
const Fit = () => (
  <Icon w={16}><path d="M8 1v4M6.500 2.500h3M8 11v4M6.500 13.500h3M1 8h4M2.500 6.500v3M11 8h4M13.500 6.500v3" stroke="#444" strokeWidth="1.200" /></Icon>
);

/* ---------- slides ---------- */
function ThumbRow({ n, active, title, size, low, children }) {
  return (
    <ThumbItem $active={active}>
      <ThumbNumber>{n}</ThumbNumber>
      <Thumb>
        <ThumbTitle $size={size} $low={low}>{title}</ThumbTitle>
        <ThumbBand />
        {children}
      </Thumb>
    </ThumbItem>
  );
}

function Copy({ indent, first, second }) {
  return (
    <>
      <Hanging $indent={indent} $gap={first}>There are many such edges!</Hanging>
      <Hanging $indent={indent} $gap={second}>
        Adding them to the graph<br />increases the running time of<br />the alignment algorithm by a<br />
        factor of <b><i>n</i></b> (where <b><i>n</i></b> is the<br />number of vertices)
      </Hanging>
      <Hanging $indent={indent} $gap={0}>
        So the complexity increases from<br />O(<i>n<sup>2</sup></i>) to O(<i>n<sup>3</sup></i>)
      </Hanging>
    </>
  );
}

const TABS = ["Home", "Insert", "Design", "Transitions", "Animations", "Slide Show", "Review", "View"];
const APPS = [
  ["Microsoft Edge", Edge], ["Microsoft Store", Store], ["Mail", Mail], ["File Explorer", Folder, "open"],
  ["Google Chrome", Chrome, "open"], ["PowerPoint", PptApp, "active"], ["Notepad", Notepad, "open"],
];

export default function App() {
  return (
    <Page>
      <Global />
      <TitleBar>
        <QuickAccess>
          <PLogo />
          <Separator />
          <button aria-label="Save"><Disk /></button>
          <button aria-label="Undo"><Undo /></button>
          <Caret w={6} h={3} color="#b3b3b3" />
          <button aria-label="Repeat"><Redo /></button>
          <Separator />
          <button aria-label="Customize Quick Access Toolbar">
            <Icon w={7} h={6}><path d="M0 .5h7" stroke="#111" /><path d="M0 2.500h7L3.500 6z" fill="#111" /></Icon>
          </button>
        </QuickAccess>
        <WindowTitle>Week_3b_Sequence_Alignment [Protected View]&nbsp; -&nbsp; Microsoft PowerPoint</WindowTitle>
        <WindowButtons>
          <WindowButton aria-label="Minimize"><Icon w={12}><path d="M0 6.500h12" stroke="#000" /></Icon></WindowButton>
          <WindowButton aria-label="Restore"><Icon w={13}><path d="M.5 3.500h9v9h-9zM3 3V.5h9.500V10H10" stroke="#000" /></Icon></WindowButton>
          <WindowButton aria-label="Close"><Cross s={13} color="#000" w={1} /></WindowButton>
        </WindowButtons>
      </TitleBar>
      <Ribbon>
        <FileTab>File</FileTab>
        {TABS.map((t) => <Tab key={t}>{t}</Tab>)}
        <RibbonEnd>
          <button aria-label="Expand the Ribbon"><Chevrons /></button>
          <button aria-label="Help"><Help /></button>
        </RibbonEnd>
      </Ribbon>
      <MessageBar>
        <Shield />
        <MessageTitle>Protected View</MessageTitle>
        <span>This file originated from an Internet location and might be unsafe. Click for more details.</span>
        <MessageButton>Enable Editing</MessageButton>
        <MessageClose aria-label="Close message"><Cross s={11} color="#a8963c" w={2} /></MessageClose>
      </MessageBar>

      <Workspace>
        <Pane>
          <PaneTabs>
            <PaneTab $active>Slides</PaneTab>
            <PaneTab>Outline</PaneTab>
            <PaneTabFill><button aria-label="Close pane"><Cross s={13} color="#3f4246" w={3} /></button></PaneTabFill>
          </PaneTabs>
          <PaneBody>
            <ThumbList>
              <ThumbRow n="33" title="Affine Gap Penalties" size={11}>
                <ThumbBullets>
                  <Bullet>Gap penalties:</Bullet>
                  <Bullet $sub><span>{"    "}<i>-ρ-σ</i>  when there is 1 indel</span></Bullet>
                  <Bullet $sub><span> <i>-ρ</i>-2<i>σ</i>  when there are 2 indels</span></Bullet>
                  <Bullet $sub><span> <i>-ρ</i>-3<i>σ</i>  when there are 3 indels, etc.</span></Bullet>
                  <Bullet $sub><span><i>-ρ- x·σ</i> (-gap opening - <i>x</i> gap extensions)</span></Bullet>
                  <Bullet><span>Somehow reduced penalties (as compared to naïve<br />scoring) are given to runs of horizontal and vertical<br />edges</span></Bullet>
                </ThumbBullets>
              </ThumbRow>
              <ThumbRow n="34" title="Affine Gap Penalties and Edit Graph" size={10}>
                <EditGraph id="head-34" frame={12} line={10} arc={0} head={1} edges={false} />
                <ThumbAside>
                  To reflect affine gap<br />penalties we have to<br />add “long” horizontal<br />and vertical edges to<br />the edit graph.  Each<br />such edge of length <i>x</i><br />should have weight<br />{"          "}<i>-ρ - x * σ</i>
                </ThumbAside>
              </ThumbRow>
              <ThumbRow n="35" active title="Adding “Affine Penalty” Edges to the Edit Graph" size={7} low>
                <EditGraph id="head-35" frame={15} line={12} arc={10} head={26} />
                <ThumbCopy><Copy indent={7} first={10} second={11} /></ThumbCopy>
              </ThumbRow>
              <ThumbRow n="36" title="Manhattan in 3 Layers" size={12}>
                <LayersDrawing />
              </ThumbRow>
              <ThumbRow n="37" title="Affine Gap Penalties and 3 Layer Manhattan Grid" size={8}>
                <ThumbBullets>
                  <Bullet><span>The three recurrences for the scoring algorithm<br />creates a 3-layered graph.</span></Bullet>
                  <Bullet><span>The top level creates/extends gaps in the sequence<br />w.</span></Bullet>
                  <Bullet><span>The bottom level creates/extends gaps in sequence<br />v.</span></Bullet>
                  <Bullet>The middle level extends matches and mismatches.</Bullet>
                </ThumbBullets>
              </ThumbRow>
              <ThumbRow />
            </ThumbList>
            <ScrollBar>
              <ScrollButton aria-label="Scroll up"><Caret up /></ScrollButton>
              <Track $rows="683fr 84px 65fr">
                <Grip aria-label="Thumbnails scroll position">
                  <Icon w={8} h={8}><path d="M0 .5h8M0 2.500h8M0 4.500h8M0 6.500h8" stroke="#878c96" /></Icon>
                </Grip>
              </Track>
              <ScrollButton aria-label="Scroll down"><Caret /></ScrollButton>
            </ScrollBar>
          </PaneBody>
        </Pane>

        <Editor>
          <Stage>
            <SlidePage>
              <SlideTitle>Adding “Affine Penalty” Edges to the Edit Graph</SlideTitle>
              <Band />
              <EditGraph id="head-main" frame={8} line={3} arc={3} head={22} />
              <SlideCopy><Copy indent={31} first={54} second={53} /></SlideCopy>
            </SlidePage>
          </Stage>
          <ScrollBar>
            <ScrollButton aria-label="Scroll up"><Caret up /></ScrollButton>
            <Track $rows="666fr 21px 107fr">
              <Grip aria-label="Slide scroll position">
                <Icon w={8} h={8}><path d="M0 .5h8M0 2.500h8M0 4.500h8M0 6.500h8" stroke="#878c96" /></Icon>
              </Grip>
            </Track>
            <ScrollButton aria-label="Scroll down"><Caret /></ScrollButton>
            <SlideJump>
              <ScrollButton aria-label="Previous slide"><Double up /></ScrollButton>
              <ScrollButton aria-label="Next slide"><Double /></ScrollButton>
            </SlideJump>
          </ScrollBar>
        </Editor>
      </Workspace>

      <StatusBar>
        <StatusItem>Slide 35 of 40</StatusItem>
        <StatusItem>"Office Theme"</StatusItem>
        <StatusItem>English (U.S.)</StatusItem>
        <ViewTools>
          <ViewButton $active aria-label="Normal"><NormalView /></ViewButton>
          <ViewButton aria-label="Slide Sorter"><SorterView /></ViewButton>
          <ViewButton aria-label="Reading View"><ReadView /></ViewButton>
          <ViewButton aria-label="Slide Show"><ShowView /></ViewButton>
          <ZoomLabel>75%</ZoomLabel>
          <RoundButton aria-label="Zoom out"><Icon w={10}><path d="M0 5h10" stroke="#666" strokeWidth="2" /></Icon></RoundButton>
          <ZoomSlider type="range" min="0" max="100" defaultValue="37" aria-label="Zoom" />
          <RoundButton aria-label="Zoom in"><Icon w={10}><path d="M0 5h10M5 0v10" stroke="#666" strokeWidth="2" /></Icon></RoundButton>
          <FitButton aria-label="Fit slide to window"><Fit /></FitButton>
        </ViewTools>
      </StatusBar>

      <TaskBar>
        <StartButton aria-label="Start"><WinLogo /></StartButton>
        <Search>
          <Lens />
          <SearchInput placeholder="Type here to search" aria-label="Search" />
        </Search>
        <TaskTool aria-label="Cortana"><Ring /></TaskTool>
        <TaskTool aria-label="Task View"><TaskView /></TaskTool>
        <Apps>
          {APPS.map(([name, Glyph, state]) => (
            <AppButton key={name} $state={state} aria-label={name}><Glyph /></AppButton>
          ))}
        </Apps>
        <Tray>
          <TrayButton aria-label="Show hidden icons"><Icon w={16} h={9}><path d="M.5 8.500L8 1l7.500 7.500" stroke="#fff" strokeWidth="1.300" /></Icon></TrayButton>
          <TrayButton aria-label="OneDrive"><Cloud /></TrayButton>
          <TrayButton aria-label="Battery"><Battery /></TrayButton>
          <TrayButton aria-label="Network"><Wifi /></TrayButton>
          <TrayButton aria-label="Volume"><Volume /></TrayButton>
          <Language>ENG</Language>
          <Clock><span>9:26 AM</span><span>4/3/2021</span></Clock>
          <Notice aria-label="Notifications"><Bubble /><NoticeBadge>1</NoticeBadge></Notice>
        </Tray>
      </TaskBar>
    </Page>
  );
}
